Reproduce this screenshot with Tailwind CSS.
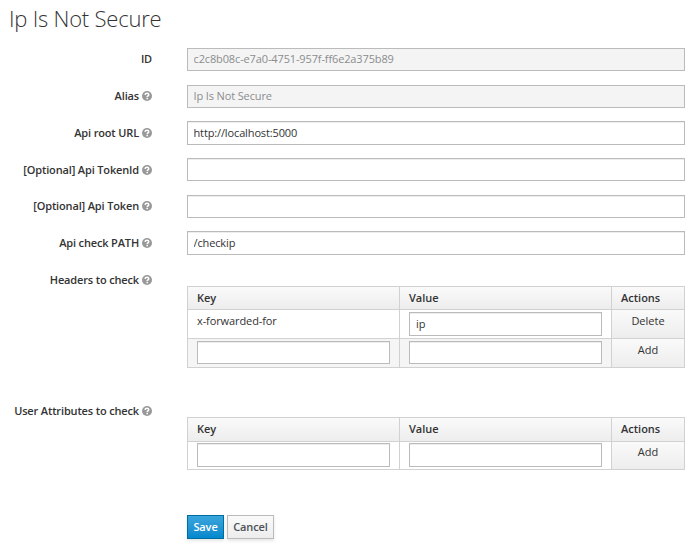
<!DOCTYPE html>
<html lang="en">
<head>
<meta charset="utf-8">
<title>Ip Is Not Secure</title>
<script src="https://cdn.jsdelivr.net/npm/@tailwindcss/browser@4"></script>
</head>
<body class="h-[544px] overflow-hidden bg-white font-['Open_Sans',sans-serif] text-[11px] leading-[17px] text-[#333]">
<svg class="hidden">
  <symbol id="help" viewBox="0 0 20 20">
    <circle cx="10" cy="10" r="10" fill="#999"/>
    <path d="M6 7.700C6.300 5.400 8 4.500 10 4.500c2.200 0 3.500 1.200 3.500 2.900 0 2.300-3.100 2.300-3.100 4.500" fill="none" stroke="#fff" stroke-width="3"/>
    <path d="M8.900 13.400h3.100v3H8.900z" fill="#fff"/>
  </symbol>
</svg>
<h1 class="h-[48px] pl-[9px] pt-[3px] text-[22px] leading-[30px] font-light tracking-[-0.22px]">Ip Is Not Secure</h1>
<form>
  <div class="flex h-[37px]">
    <label class="mr-[35px] flex h-[20px] w-[152px] items-center justify-end font-semibold tracking-[-0.15px]">ID</label>
    <input class="h-[23px] w-[498px] border border-[#bbb] bg-[#f4f4f4] pb-[2px] pl-[5.500px] tracking-[-0.13px] text-[#8b8d8f]" value="c2c8b08c-e7a0-4751-957f-ff6e2a375b89" disabled>
  </div>
  <div class="flex h-[36px]">
    <label class="mr-[35px] flex h-[20px] w-[152px] items-center justify-end gap-[3px] font-semibold tracking-[-0.15px]">Alias<svg class="mt-[2px] size-[10px]"><use href="#help"/></svg></label>
    <input class="h-[23px] w-[498px] border border-[#bbb] bg-[#f4f4f4] pb-[2px] pl-[5.500px] tracking-[-0.13px] text-[#8b8d8f]" value="Ip Is Not Secure" disabled>
  </div>
  <div class="flex h-[37px]">
    <label class="mr-[35px] flex h-[22px] w-[152px] items-center justify-end gap-[3px] font-semibold tracking-[-0.15px]">Api root URL<svg class="mt-[2px] size-[10px]"><use href="#help"/></svg></label>
    <input class="h-[24px] w-[498px] border border-[#bbb] pb-[2px] pl-[5.500px] tracking-[-0.13px] shadow-[inset_0_1px_0_#ededed]" value="http://localhost:5000">
  </div>
  <div class="flex h-[37px]">
    <label class="mr-[35px] flex h-[22px] w-[152px] items-center justify-end gap-[3px] font-semibold tracking-[-0.15px]">[Optional] Api TokenId<svg class="mt-[2px] size-[10px]"><use href="#help"/></svg></label>
    <input class="h-[23px] w-[498px] border border-[#bbb] px-[6px] shadow-[inset_0_1px_0_#ededed]">
  </div>
  <div class="flex h-[36px]">
    <label class="mr-[35px] flex h-[20px] w-[152px] items-center justify-end gap-[3px] font-semibold tracking-[-0.15px]">[Optional] Api Token<svg class="mt-[2px] size-[10px]"><use href="#help"/></svg></label>
    <input class="h-[23px] w-[498px] border border-[#bbb] px-[6px] shadow-[inset_0_1px_0_#ededed]">
  </div>
  <div class="flex h-[37px]">
    <label class="mr-[35px] flex h-[22px] w-[152px] items-center justify-end gap-[3px] font-semibold tracking-[-0.15px]">Api check PATH<svg class="mt-[2px] size-[10px]"><use href="#help"/></svg></label>
    <input class="h-[24px] w-[498px] border border-[#bbb] pb-[2px] pl-[5.500px] tracking-[-0.13px] shadow-[inset_0_1px_0_#ededed]" value="/checkip">
  </div>
  <div class="flex h-[131px]">
    <label class="mr-[35px] flex h-[22px] w-[152px] items-center justify-end gap-[3px] font-semibold tracking-[-0.15px]">Headers to check<svg class="mt-[2px] size-[10px]"><use href="#help"/></svg></label>
    <div class="mt-[18px] grid h-[82px] w-[498px] grid-cols-[211px_211px_72px] grid-rows-[22px_28px_28px] gap-px border border-[#d1d1d1] bg-[#d1d1d1]">
      <div class="col-span-3 grid grid-cols-[211px_211px_72px] gap-px bg-linear-to-b from-[#fafafa] to-[#ededed] font-semibold">
        <div class="pl-[9px] pt-[2px]">Key</div>
        <div class="-ml-px -mr-px border-x border-[#d1d1d1] pl-[9px] pt-[2px]">Value</div>
        <div class="pl-[9px] pt-[2px]">Actions</div>
      </div>
      <div class="bg-white pl-[9px] pt-[2px] tracking-[-0.1px]">x-forwarded-for</div>
      <div class="bg-white pl-[9px] pt-[2px]"><input class="block h-[24px] w-[193px] border border-[#bbb] px-[6px] pb-px shadow-[inset_0_1px_0_#ededed]" value="ip"></div>
      <div class="bg-linear-to-b from-[#fafafa] to-[#ededed] pt-[2px] text-center">Delete</div>
      <div class="bg-[#f5f5f5] pl-[9px] pt-[2px]"><input class="block h-[23px] w-[193px] border border-[#bbb] bg-white px-[6px] shadow-[inset_0_1px_0_#ededed]"></div>
      <div class="bg-[#f5f5f5] pl-[9px] pt-[2px]"><input class="block h-[23px] w-[193px] border border-[#bbb] bg-white px-[6px] shadow-[inset_0_1px_0_#ededed]"></div>
      <div class="bg-linear-to-b from-[#fafafa] to-[#ededed] pt-[2px] text-center">Add</div>
    </div>
  </div>
  <div class="flex h-[116px]">
    <label class="mr-[35px] flex h-[22px] w-[152px] items-center justify-end gap-[3px] font-semibold tracking-[-0.15px]">User Attributes to check<svg class="mt-[2px] size-[10px]"><use href="#help"/></svg></label>
    <div class="mt-[18px] grid h-[53px] w-[498px] grid-cols-[211px_211px_72px] grid-rows-[23px_27px] gap-px border border-[#d1d1d1] bg-[#d1d1d1]">
      <div class="col-span-3 grid grid-cols-[211px_211px_72px] gap-px bg-linear-to-b from-[#fafafa] to-[#ededed] font-semibold">
        <div class="pl-[9px] pt-[2px]">Key</div>
        <div class="-ml-px -mr-px border-x border-[#d1d1d1] pl-[9px] pt-[2px]">Value</div>
        <div class="pl-[9px] pt-[2px]">Actions</div>
      </div>
      <div class="bg-white pl-[9px] pt-px"><input class="block h-[24px] w-[193px] border border-[#bbb] px-[6px] shadow-[inset_0_1px_0_#ededed]"></div>
      <div class="bg-white pl-[9px] pt-px"><input class="block h-[24px] w-[193px] border border-[#bbb] px-[6px] shadow-[inset_0_1px_0_#ededed]"></div>
      <div class="bg-linear-to-b from-[#fafafa] to-[#ededed] pt-px text-center">Add</div>
    </div>
  </div>
  <div class="flex gap-[3px] pl-[187px]">
    <button class="h-[24px] w-[37px] border border-[#006e9c] bg-linear-to-b from-[#39a5dc] to-[#0088ce] pb-[2px] text-center font-semibold tracking-[-0.1px] text-white shadow-[0_2px_3px_rgba(3,3,3,0.1)]">Save</button>
    <button class="h-[24px] w-[47px] border border-[#bbb] bg-linear-to-b from-[#fafafa] to-[#ededed] pb-[2px] text-center font-semibold tracking-[-0.1px] text-[#4d5258] shadow-[0_2px_3px_rgba(3,3,3,0.1)]">Cancel</button>
  </div>
</form>
</body>
</html>
